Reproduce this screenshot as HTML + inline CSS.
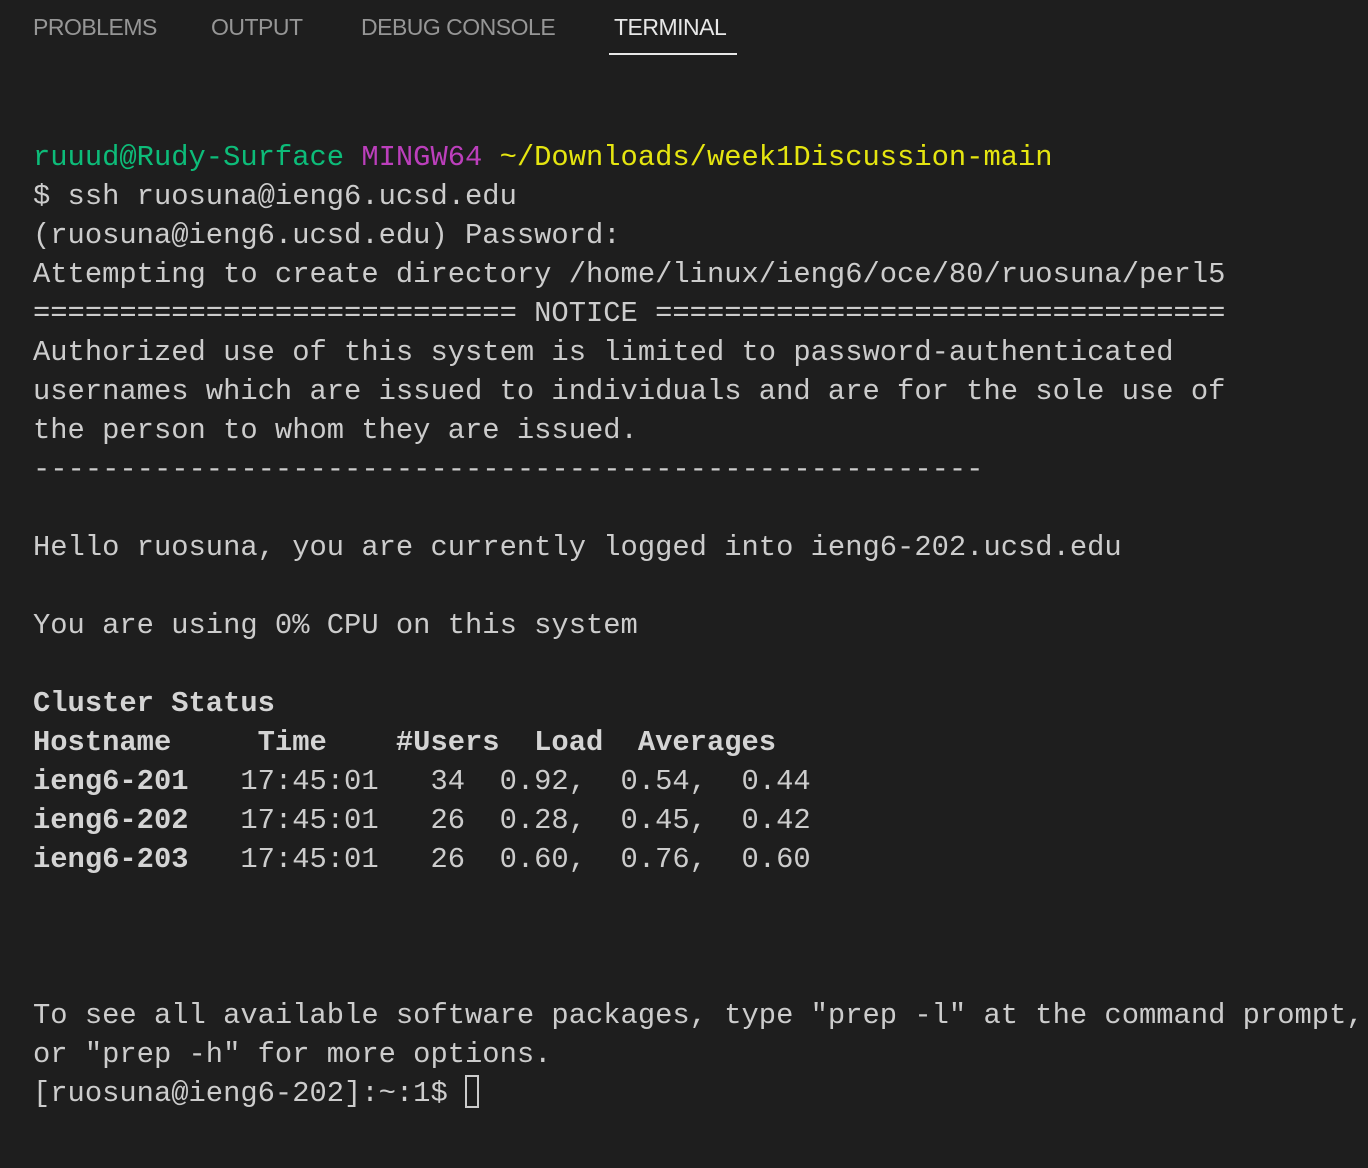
<!DOCTYPE html>
<html><head><meta charset="utf-8"><style>
html,body{margin:0;padding:0;background:#1e1e1e;width:1368px;height:1168px;overflow:hidden}
.tabs{position:absolute;top:0;left:0;height:60px;font-family:"Liberation Sans",sans-serif;font-size:23px;color:#969696}
.tab{position:absolute;top:14px;letter-spacing:-0.5px;white-space:nowrap}
.act{color:#e7e7e7}
.ul{position:absolute;left:609px;top:53px;width:128px;height:2px;background:#e7e7e7}
pre{position:absolute;left:33px;top:138px;margin:0;font-family:"Liberation Mono",monospace;font-size:28.8px;line-height:39px;color:#cccccc}
.g{color:#0dbc79}.m{color:#bc3fbc}.y{color:#e5e510}b{font-weight:bold;color:#d4d4d4}
.cur{display:inline-block;width:14px;height:33px;border:2px solid #cccccc;vertical-align:-7px;box-sizing:border-box}
</style></head><body>
<div class="tabs">
<span class="tab" style="left:33px">PROBLEMS</span>
<span class="tab" style="left:211px">OUTPUT</span>
<span class="tab" style="left:361px">DEBUG CONSOLE</span>
<span class="tab act" style="left:614px">TERMINAL</span>
<div class="ul"></div>
</div>
<pre><span class="g">ruuud@Rudy-Surface</span> <span class="m">MINGW64</span> <span class="y">~/Downloads/week1Discussion-main</span>
$ ssh ruosuna@ieng6.ucsd.edu
(ruosuna@ieng6.ucsd.edu) Password:
Attempting to create directory /home/linux/ieng6/oce/80/ruosuna/perl5
============================ NOTICE =================================
Authorized use of this system is limited to password-authenticated
usernames which are issued to individuals and are for the sole use of
the person to whom they are issued.
-------------------------------------------------------

Hello ruosuna, you are currently logged into ieng6-202.ucsd.edu

You are using 0% CPU on this system

<b>Cluster Status</b>
<b>Hostname     Time    #Users  Load  Averages</b>
<b>ieng6-201</b>   17:45:01   34  0.92,  0.54,  0.44
<b>ieng6-202</b>   17:45:01   26  0.28,  0.45,  0.42
<b>ieng6-203</b>   17:45:01   26  0.60,  0.76,  0.60



To see all available software packages, type "prep -l" at the command prompt,
or "prep -h" for more options.
[ruosuna@ieng6-202]:~:1$ <span class="cur"></span></pre>
</body></html>
